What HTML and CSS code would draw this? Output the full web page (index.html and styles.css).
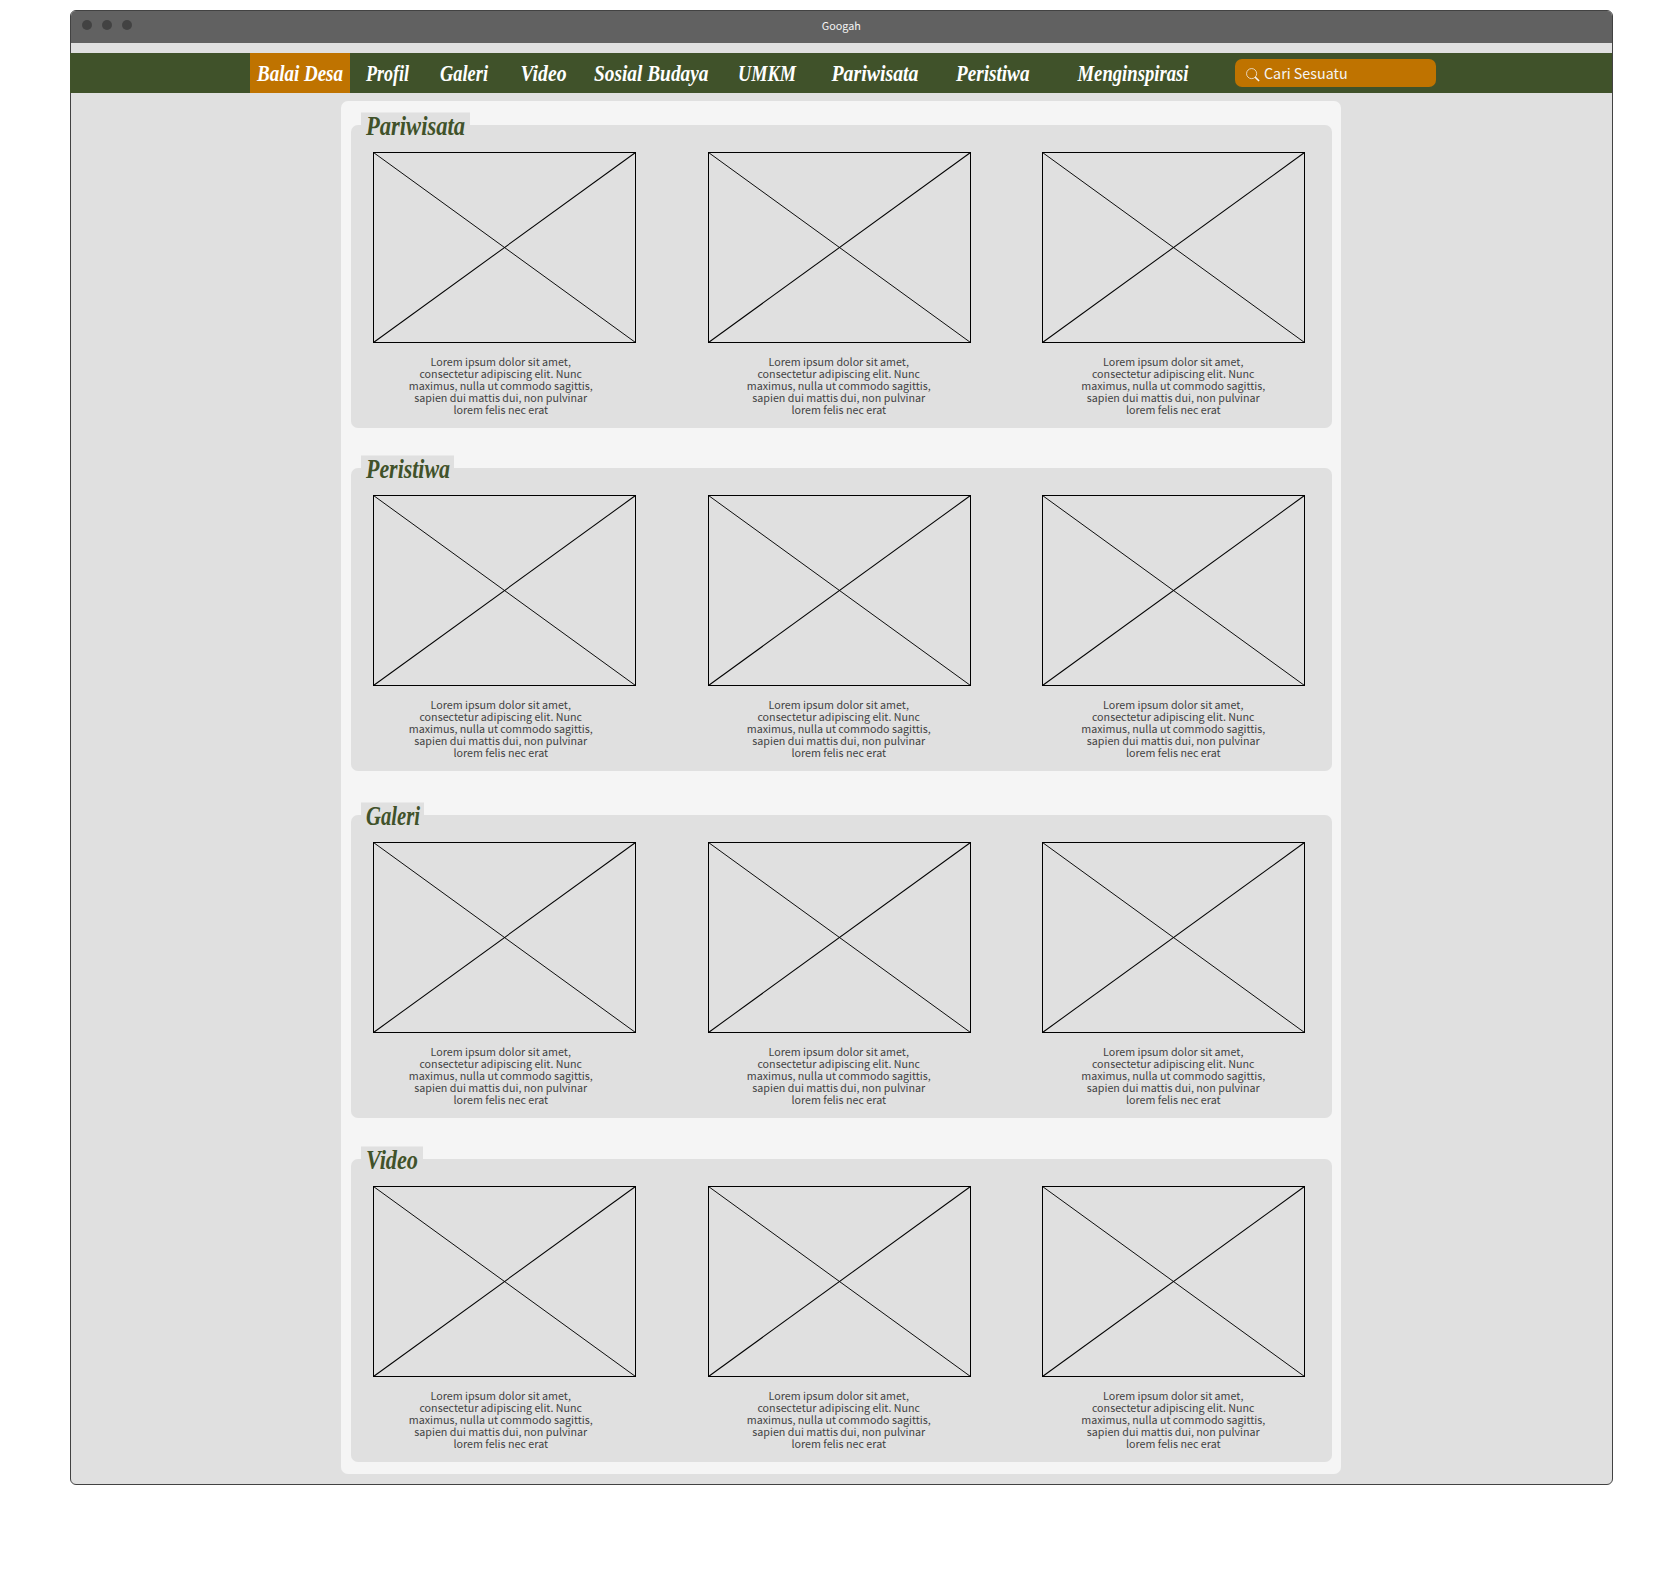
FILE: index.html
```html
<!DOCTYPE html>
<html lang="id">
<head>
<meta charset="utf-8">
<title>Googah</title>
<link rel="stylesheet" href="styles.css">
</head>
<body>
<div class="window">
  <header class="titlebar">
    <span class="dots"><i></i><i></i><i></i></span>
    <span class="title">Googah</span>
    <span></span>
  </header>
  <nav class="nav">
    <a class="tab tab-home active"><svg class="script"><text x="7" y="28" textLength="86" lengthAdjust="spacingAndGlyphs">Balai Desa</text></svg></a>
    <a class="tab tab-profil"><svg class="script"><text x="16" y="28" textLength="43" lengthAdjust="spacingAndGlyphs">Profil</text></svg></a>
    <a class="tab tab-galeri"><svg class="script"><text x="15" y="28" textLength="48" lengthAdjust="spacingAndGlyphs">Galeri</text></svg></a>
    <a class="tab tab-video"><svg class="script"><text x="15.5" y="28" textLength="46" lengthAdjust="spacingAndGlyphs">Video</text></svg></a>
    <a class="tab tab-sosial"><svg class="script"><text x="14" y="28" textLength="114.5" lengthAdjust="spacingAndGlyphs">Sosial Budaya</text></svg></a>
    <a class="tab tab-umkm"><svg class="script"><text x="15" y="28" textLength="58" lengthAdjust="spacingAndGlyphs">UMKM</text></svg></a>
    <a class="tab tab-pariwisata"><svg class="script"><text x="16.5" y="28" textLength="87" lengthAdjust="spacingAndGlyphs">Pariwisata</text></svg></a>
    <a class="tab tab-peristiwa"><svg class="script"><text x="19" y="28" textLength="73.5" lengthAdjust="spacingAndGlyphs">Peristiwa</text></svg></a>
    <a class="tab tab-inspirasi"><svg class="script"><text x="22.5" y="28" textLength="111" lengthAdjust="spacingAndGlyphs">Menginspirasi</text></svg></a>
    <div class="search">
      <svg class="search-icon" viewBox="0 0 15 15"><circle cx="6" cy="6" r="5.4"/><path class="handle" d="M9.8 9.8 14 14"/></svg>
      <span>Cari Sesuatu</span>
    </div>
  </nav>
  <main class="panel">
    <section class="group">
      <h2 class="legend legend-pariwisata"><svg class="script"><text x="5" y="22" textLength="99" lengthAdjust="spacingAndGlyphs">Pariwisata</text></svg></h2>
      <div class="cards">
        <article><svg class="photo"><use href="#cross"/></svg><p>Lorem ipsum dolor sit amet,<br>consectetur adipiscing elit. Nunc<br>maximus, nulla ut commodo sagittis,<br>sapien dui mattis dui, non pulvinar<br>lorem felis nec erat</p></article>
        <article><svg class="photo"><use href="#cross"/></svg><p>Lorem ipsum dolor sit amet,<br>consectetur adipiscing elit. Nunc<br>maximus, nulla ut commodo sagittis,<br>sapien dui mattis dui, non pulvinar<br>lorem felis nec erat</p></article>
        <article><svg class="photo"><use href="#cross"/></svg><p>Lorem ipsum dolor sit amet,<br>consectetur adipiscing elit. Nunc<br>maximus, nulla ut commodo sagittis,<br>sapien dui mattis dui, non pulvinar<br>lorem felis nec erat</p></article>
      </div>
    </section>
    <section class="group">
      <h2 class="legend legend-peristiwa"><svg class="script"><text x="5" y="22" textLength="84" lengthAdjust="spacingAndGlyphs">Peristiwa</text></svg></h2>
      <div class="cards">
        <article><svg class="photo"><use href="#cross"/></svg><p>Lorem ipsum dolor sit amet,<br>consectetur adipiscing elit. Nunc<br>maximus, nulla ut commodo sagittis,<br>sapien dui mattis dui, non pulvinar<br>lorem felis nec erat</p></article>
        <article><svg class="photo"><use href="#cross"/></svg><p>Lorem ipsum dolor sit amet,<br>consectetur adipiscing elit. Nunc<br>maximus, nulla ut commodo sagittis,<br>sapien dui mattis dui, non pulvinar<br>lorem felis nec erat</p></article>
        <article><svg class="photo"><use href="#cross"/></svg><p>Lorem ipsum dolor sit amet,<br>consectetur adipiscing elit. Nunc<br>maximus, nulla ut commodo sagittis,<br>sapien dui mattis dui, non pulvinar<br>lorem felis nec erat</p></article>
      </div>
    </section>
    <section class="group group-galeri">
      <h2 class="legend legend-galeri"><svg class="script"><text x="5" y="22" textLength="54" lengthAdjust="spacingAndGlyphs">Galeri</text></svg></h2>
      <div class="cards">
        <article><svg class="photo"><use href="#cross"/></svg><p>Lorem ipsum dolor sit amet,<br>consectetur adipiscing elit. Nunc<br>maximus, nulla ut commodo sagittis,<br>sapien dui mattis dui, non pulvinar<br>lorem felis nec erat</p></article>
        <article><svg class="photo"><use href="#cross"/></svg><p>Lorem ipsum dolor sit amet,<br>consectetur adipiscing elit. Nunc<br>maximus, nulla ut commodo sagittis,<br>sapien dui mattis dui, non pulvinar<br>lorem felis nec erat</p></article>
        <article><svg class="photo"><use href="#cross"/></svg><p>Lorem ipsum dolor sit amet,<br>consectetur adipiscing elit. Nunc<br>maximus, nulla ut commodo sagittis,<br>sapien dui mattis dui, non pulvinar<br>lorem felis nec erat</p></article>
      </div>
    </section>
    <section class="group">
      <h2 class="legend legend-video"><svg class="script"><text x="5" y="22" textLength="52" lengthAdjust="spacingAndGlyphs">Video</text></svg></h2>
      <div class="cards">
        <article><svg class="photo"><use href="#cross"/></svg><p>Lorem ipsum dolor sit amet,<br>consectetur adipiscing elit. Nunc<br>maximus, nulla ut commodo sagittis,<br>sapien dui mattis dui, non pulvinar<br>lorem felis nec erat</p></article>
        <article><svg class="photo"><use href="#cross"/></svg><p>Lorem ipsum dolor sit amet,<br>consectetur adipiscing elit. Nunc<br>maximus, nulla ut commodo sagittis,<br>sapien dui mattis dui, non pulvinar<br>lorem felis nec erat</p></article>
        <article><svg class="photo"><use href="#cross"/></svg><p>Lorem ipsum dolor sit amet,<br>consectetur adipiscing elit. Nunc<br>maximus, nulla ut commodo sagittis,<br>sapien dui mattis dui, non pulvinar<br>lorem felis nec erat</p></article>
      </div>
    </section>
  </main>
</div>
<svg class="defs" width="0" height="0">
  <symbol id="cross" viewBox="0 0 263 191">
    <rect x=".5" y=".5" width="262" height="190" fill="none" stroke="#000"/>
    <path d="M.5 .5 262.5 190.5" stroke="#000" stroke-width=".95"/>
    <path d="M262.5 .5 .5 190.5" stroke="#000" stroke-width="1.03"/>
  </symbol>
</svg>
</body>
</html>
```
FILE: styles.css
```css
* { box-sizing: border-box; }
body {
  margin: 0;
  padding: 10px 49px 0 70px;
  height: 1595px;
  background: #fff;
  font-family: "Noto Sans CJK SC", "Noto Sans", sans-serif;
  overflow: hidden;
}
.defs { display: block; }
.window {
  height: 1475px;
  border: 1px solid #424242;
  border-radius: 6px;
  background: #e0e0e0;
}
.titlebar {
  display: grid;
  grid-template-columns: 1fr auto 1fr;
  height: 32px;
  padding: 0 11px 0 10.5px;
  border-radius: 5px 5px 0 0;
  background: #616161;
}
.dots { display: flex; gap: 10px; padding-top: 9px; }
.dots i { width: 10px; height: 10px; border-radius: 50%; background: #424242; }
.title { color: #f5f5f5; font-size: 10.8px; line-height: 16px; padding-top: 6px; }

.nav {
  display: flex;
  height: 40px;
  margin: 10px 0 0 -1px;
  padding-left: 180px;
  background: #40522a;
}
.tab { display: block; flex: none; }
.script {
  display: block;
  width: 100%;
  height: 100%;
  overflow: visible;
  font-family: "Liberation Serif", serif;
  font-weight: bold;
  font-style: italic;
}
.nav .script { font-size: 23px; fill: #fff; }
.active { background: #bf7300; }
.tab-home { width: 100px; }
.tab-profil { width: 75px; }
.tab-galeri { width: 80px; }
.tab-video { width: 75px; }
.tab-sosial { width: 143px; }
.tab-umkm { width: 92px; }
.tab-pariwisata { width: 122px; }
.tab-peristiwa { width: 118px; }
.tab-inspirasi { width: 180px; }
.search {
  display: flex;
  align-items: center;
  gap: 4px;
  width: 201px;
  height: 28px;
  margin-top: 6px;
  padding-left: 11px;
  border-radius: 7px;
  background: #bf7300;
  color: #f5f5f5;
  font-size: 14.3px;
  line-height: 28px;
}
.search-icon { width: 14px; height: 14px; margin-top: 3px; fill: none; stroke: #f5f5f5; stroke-width: .8; }
.search-icon .handle { stroke-width: 1.6; }

.panel {
  width: 1000px;
  height: 1373px;
  margin: 8px 0 0 270px;
  padding: 23.5px 9px 0 10px;
  border-radius: 7px;
  background: #f5f5f5;
}
.group {
  height: 303px;
  margin-bottom: 40px;
  border-radius: 7px;
  background: #e0e0e0;
}
.group-galeri { margin-top: 44px; margin-bottom: 41px; }
.legend {
  height: 30px;
  margin: 0 0 0 10px;
  background: #e0e0e0;
  transform: translateY(-12.5px);
}
.legend .script { font-size: 27px; fill: #40522a; }
.legend-pariwisata { width: 109px; }
.legend-peristiwa { width: 93px; }
.legend-galeri { width: 63px; }
.legend-video { width: 62px; }
.cards {
  display: grid;
  grid-template-columns: 263px 263px 263px;
  column-gap: 71.5px;
  margin: -2.5px 0 0 22px;
}
.photo { display: block; width: 263px; height: 191px; }
.cards p {
  margin: 13px 7.5px 0 0;
  color: #424242;
  font-size: 10.72px;
  line-height: 12px;
  text-align: center;
  white-space: nowrap;
}
.cards article:nth-child(n+2) p { margin-right: .5px; }
```
